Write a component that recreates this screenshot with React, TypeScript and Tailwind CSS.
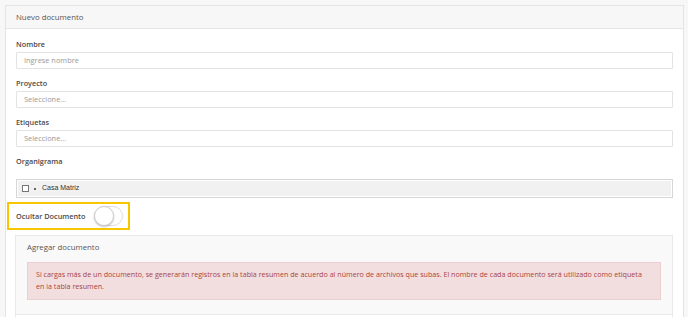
function Field({ label, placeholder }: { label: string; placeholder: string }) {
  return (
    <div className="mb-[8px]">
      <p className="mb-[2px] h-[12px] text-[7.3px] leading-[12px] font-semibold text-[#4a4a4a]">{label}</p>
      <div className="flex h-[17px] items-center rounded-[1px] border border-[#e3e3e3] bg-white px-[7px] text-[7.4px] text-[#999]">
        {placeholder}
      </div>
    </div>
  )
}

export default function App() {
  return (
    <div
      className="h-[317px] w-[688px] overflow-hidden bg-[#f7f7f7] pt-[5px] pr-[4px] pl-[5px]"
      style={{ fontFamily: '"Open Sans", "Liberation Sans", sans-serif' }}
    >
      <div className="h-[320px] border border-[#e4e4e4] bg-white">
        <div className="flex h-[23px] items-center border-b border-[#e6e6e6] bg-[#f7f7f7] px-[10px] pt-px text-[7.8px] text-[#555]">
          Nuevo documento
        </div>

        <div className="px-[10px] pt-[9px]">
          <Field label="Nombre" placeholder="Ingrese nombre" />
          <Field label="Proyecto" placeholder="Seleccione..." />
          <Field label="Etiquetas" placeholder="Seleccione..." />

          <p className="h-[12px] text-[7.3px] leading-[12px] font-semibold text-[#4a4a4a]">Organigrama</p>

          <div className="mt-[12px] border border-[#d6d6d6] p-[1px]">
            <div className="flex h-[15px] items-center gap-[4px] bg-[#f1f1f1] px-[4px]">
              <span className="h-[7px] w-[7px] border border-[#777] bg-white" />
              <span className="ml-[1px] h-[2px] w-[2px] bg-[#666]" />
              <span
                className="ml-[2px] text-[7px] text-[#333]"
                style={{ fontFamily: '"Liberation Sans", Arial, sans-serif' }}
              >
                Casa Matriz
              </span>
            </div>
          </div>

          <div className="mt-[4px] -ml-[9px] flex h-[28px] w-[123px] items-center border-2 border-[#f7c600] pl-[7px]">
            <span className="text-[7.3px] font-semibold whitespace-nowrap text-[#4a4a4a]">Ocultar Documento</span>
            <div className="ml-[9px] flex h-[20px] w-[29px] shrink-0 items-center rounded-full border border-[#dedede] bg-white">
              <span className="-ml-px h-[20px] w-[20px] rounded-full border border-[#d0d0d0] bg-white shadow-[0_1px_2px_rgba(0,0,0,0.25)]" />
            </div>
          </div>

          <div className="mt-[5px] -ml-[1px] border border-[#e9e9e9] bg-[#f9f9f9]">
            <div className="px-[11px] pt-[5px] pb-[14px]">
              <p className="h-[13px] text-[7.8px] leading-[13px] text-[#555]">Agregar documento</p>
              <div className="mt-[8px] border border-[#ebd0d3] bg-[#f2dede] pt-[5px] pr-[10px] pb-[7px] pl-[8px] text-[7.15px] leading-[12px] text-[#a94442]">
                Si cargas más de un documento, se generarán registros en la tabla resumen de acuerdo al número de
                archivos que subas. El nombre de cada documento será utilizado como etiqueta en la tabla resumen.
              </div>
            </div>
            <div className="h-[20px] border-t border-[#e9e9e9] bg-white" />
          </div>
        </div>
      </div>
    </div>
  )
}
